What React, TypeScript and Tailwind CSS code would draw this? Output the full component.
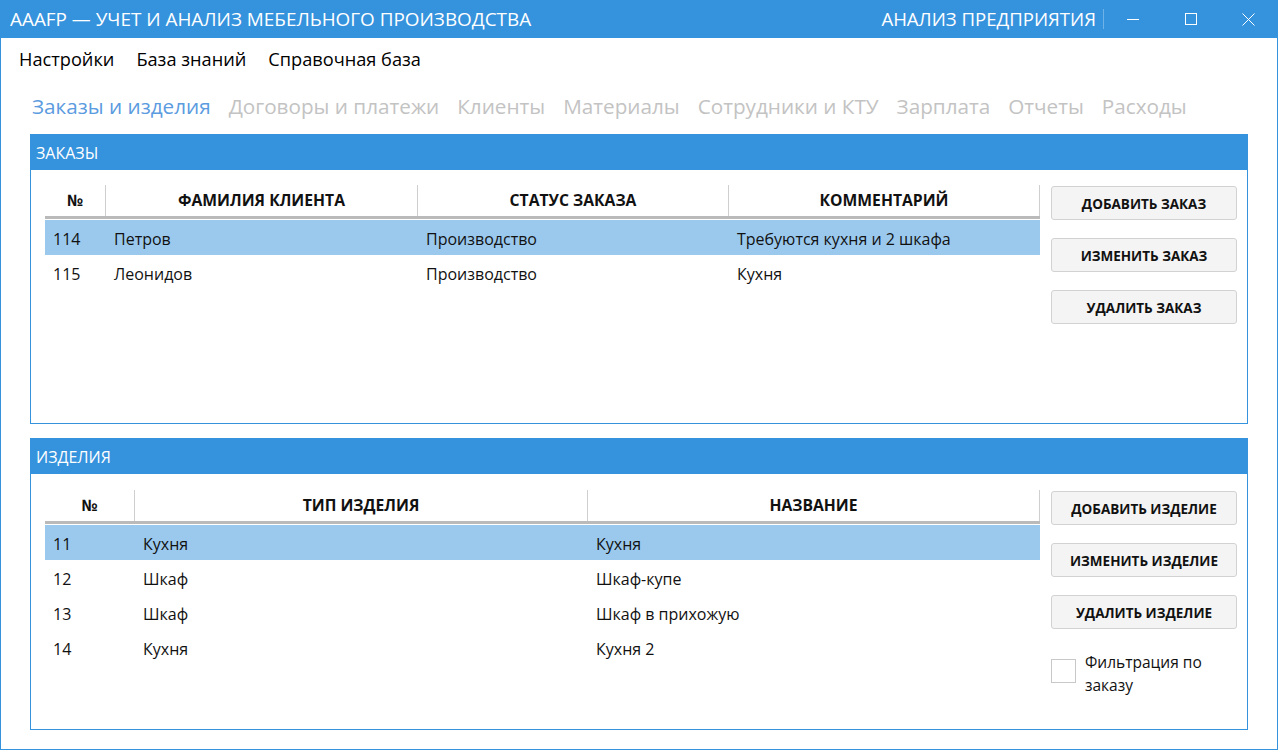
const FONT = "font-['Open_Sans',sans-serif]"

const TABS = ['Заказы и изделия', 'Договоры и платежи', 'Клиенты', 'Материалы', 'Сотрудники и КТУ', 'Зарплата', 'Отчеты', 'Расходы']

const ORDERS = [
  ['114', 'Петров', 'Производство', 'Требуются кухня и 2 шкафа'],
  ['115', 'Леонидов', 'Производство', 'Кухня']
]

const ITEMS = [
  ['11', 'Кухня', 'Кухня'],
  ['12', 'Шкаф', 'Шкаф-купе'],
  ['13', 'Шкаф', 'Шкаф в прихожую'],
  ['14', 'Кухня', 'Кухня 2']
]

function ActionButton({ label }: { label: string }): React.JSX.Element {
  return (
    <button className="flex h-[34px] w-[186px] items-center justify-center rounded-[3px] border border-[#d2d2d2] bg-[#f4f4f4] pt-[3px] text-[13.5px] font-bold text-[#111]">
      {label}
    </button>
  )
}

function DataTable({
  cols,
  headers,
  rows
}: {
  cols: string
  headers: string[]
  rows: string[][]
}): React.JSX.Element {
  return (
    <div className="w-[995px]">
      <div className={`grid h-[31px] ${cols}`}>
        {headers.map((h) => (
          <div
            key={h}
            className="flex items-center justify-center border-r border-[#cfcfcf] text-[15.7px] font-bold text-[#111]"
          >
            {h}
          </div>
        ))}
      </div>
      <div className="h-[3px] bg-[#bababa]" />
      <div className="pt-px">
        {rows.map((r, idx) => (
          <div key={r[0]} className={`grid h-[35px] items-center ${cols} ${idx === 0 ? 'bg-[#9bc9ee]' : ''}`}>
            {r.map((c, i) => (
              <div key={i} className="pl-2 pt-[3px] text-[16px] text-[#111]">
                {c}
              </div>
            ))}
          </div>
        ))}
      </div>
    </div>
  )
}

function Panel({
  title,
  height,
  pad,
  children
}: {
  title: string
  height: string
  pad: string
  children: React.ReactNode
}): React.JSX.Element {
  return (
    <div className={`flex ${height} flex-col border border-[#3592dd]`}>
      <div className="flex h-[35px] shrink-0 items-center bg-[#3592dd] pl-[5px] text-[16px] text-white">{title}</div>
      <div className={`flex gap-[11px] pl-[14px] ${pad}`}>{children}</div>
    </div>
  )
}

export default function App(): React.JSX.Element {
  return (
    <div className={`flex h-[750px] w-[1278px] flex-col bg-[#3592dd] px-px pb-px ${FONT}`}>
      {/* Title bar */}
      <div className="flex h-[38px] shrink-0 items-center pl-[9px] text-white">
        <span className="text-[18.9px]">AAAFP — УЧЕТ И АНАЛИЗ МЕБЕЛЬНОГО ПРОИЗВОДСТВА</span>
        <span className="ml-auto text-[18.6px]">АНАЛИЗ ПРЕДПРИЯТИЯ</span>
        <span className="ml-[7px] h-[20px] w-px bg-[#6fb2e8]" />
        <div className="flex h-full">
          <div className="flex w-[58px] items-center justify-center">
            <svg width="12" height="12" viewBox="0 0 12 12" fill="none" stroke="white" strokeWidth="1">
              <path d="M0 6.5h12" />
            </svg>
          </div>
          <div className="flex w-[58px] items-center justify-center">
            <svg width="12" height="12" viewBox="0 0 12 12" fill="none" stroke="white" strokeWidth="1">
              <rect x="0.5" y="0.5" width="11" height="11" />
            </svg>
          </div>
          <div className="flex w-[57px] items-center justify-center">
            <svg width="13" height="13" viewBox="0 0 13 13" fill="none" stroke="white" strokeWidth="1">
              <path d="M0.5 0.5l12 12M12.5 0.5l-12 12" />
            </svg>
          </div>
        </div>
      </div>

      <div className="flex flex-1 flex-col bg-white">
        {/* Menu */}
        <div className="flex h-[44px] items-center gap-[22px] pl-[18px] text-[18.2px] text-black">
          <span>Настройки</span>
          <span>База знаний</span>
          <span>Справочная база</span>
        </div>

        {/* Tabs */}
        <div className="flex h-[50px] items-center gap-[18px] pl-[31px] text-[20.7px]">
          {TABS.map((t, i) => (
            <span key={t} className={i === 0 ? 'text-[#5b9be0]' : 'text-[#c3c3c3]'}>
              {t}
            </span>
          ))}
        </div>

        <div className="mx-[29px] mt-[2px] flex flex-col gap-[14px]">
          <Panel title="ЗАКАЗЫ" height="h-[290px]" pad="pt-[15px]">
            <DataTable
              cols="grid-cols-[61px_312px_311px_311px]"
              headers={['№', 'ФАМИЛИЯ КЛИЕНТА', 'СТАТУС ЗАКАЗА', 'КОММЕНТАРИЙ']}
              rows={ORDERS}
            />
            <div className="flex flex-col gap-[18px] pt-px">
              <ActionButton label="ДОБАВИТЬ ЗАКАЗ" />
              <ActionButton label="ИЗМЕНИТЬ ЗАКАЗ" />
              <ActionButton label="УДАЛИТЬ ЗАКАЗ" />
            </div>
          </Panel>

          <Panel title="ИЗДЕЛИЯ" height="h-[292px]" pad="pt-[16px]">
            <DataTable
              cols="grid-cols-[90px_453px_452px]"
              headers={['№', 'ТИП ИЗДЕЛИЯ', 'НАЗВАНИЕ']}
              rows={ITEMS}
            />
            <div className="flex flex-col gap-[18px] pt-px">
              <ActionButton label="ДОБАВИТЬ ИЗДЕЛИЕ" />
              <ActionButton label="ИЗМЕНИТЬ ИЗДЕЛИЕ" />
              <ActionButton label="УДАЛИТЬ ИЗДЕЛИЕ" />
              <label className="mt-[4px] flex items-start gap-[9px] text-[15.5px] leading-[23px] text-[#111]">
                <span className="mt-[8px] h-[24px] w-[25px] shrink-0 border border-[#c8c8c8] bg-white" />
                <span>
                  Фильтрация по
                  <br />
                  заказу
                </span>
              </label>
            </div>
          </Panel>
        </div>
      </div>
    </div>
  )
}
